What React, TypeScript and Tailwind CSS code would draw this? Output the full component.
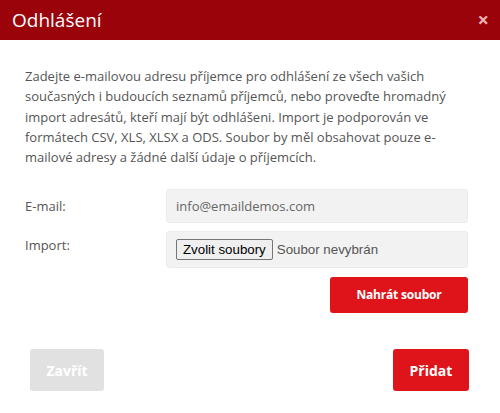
export default function App() {
  return (
    <div className="w-[500px] h-[413px] bg-white flex flex-col font-['Open_Sans',sans-serif] overflow-hidden">
      {/* Header */}
      <div className="h-10 bg-[#9b030a] flex items-center justify-between pl-3 pr-[11px]">
        <h1 className="text-[19px] text-white leading-none">Odhlášení</h1>
        <button className="text-[#e9b3b5] text-[20px] leading-none font-bold">×</button>
      </div>

      <div className="flex flex-col px-[25px] pt-[26px]">
        <p className="text-[13px] leading-[20.3px] text-[#555] pr-2">
          Zadejte e-mailovou adresu příjemce pro odhlášení ze všech vašich současných i budoucích seznamů příjemců, nebo proveďte hromadný import adresátů, kteří mají být odhlášeni. Import je podporován ve formátech CSV, XLS, XLSX a ODS. Soubor by měl obsahovat pouze e-mailové adresy a žádné další údaje o příjemcích.
        </p>

        <div className="flex flex-col gap-2 mt-[22px]">
          <div className="flex items-center">
            <label className="w-[141px] text-[13px] text-[#555]">E-mail:</label>
            <div className="w-[302px] h-[34px] bg-[#f2f2f2] border border-[#ececec] rounded-[3px] flex items-center px-[9px] text-[13px] text-[#666]">
              info@emaildemos.com
            </div>
          </div>
          <div className="flex items-center">
            <label className="w-[141px] text-[13px] text-[#555] -mt-2">Import:</label>
            <div className="w-[302px] h-[37px] bg-[#f2f2f2] border border-[#ececec] rounded-[3px] flex items-center pl-[9px] gap-[4px] font-['Liberation_Sans',sans-serif] text-[13.3px]">
              <span className="h-[21px] px-[6px] flex items-center border border-[#767676] bg-[#efefef] rounded-[2px] text-black">Zvolit soubory</span>
              <span className="text-[#555]">Soubor nevybrán</span>
            </div>
          </div>
          <div className="flex justify-end pr-[7px] pt-px">
            <button className="w-[138px] h-9 bg-[#df141b] rounded-[3px] text-white text-[12px] font-bold tracking-[-0.2px]">
              Nahrát soubor
            </button>
          </div>
        </div>

        <div className="flex justify-between mt-9 px-[5px] pr-[6px]">
          <button className="w-[74px] h-[42px] bg-[#e1e1e1] rounded-[3px] text-white text-[14px] font-bold">
            Zavřít
          </button>
          <button className="w-[76px] h-[42px] bg-[#df141b] rounded-[3px] text-white text-[14px] font-bold">
            Přidat
          </button>
        </div>
      </div>
    </div>
  );
}
